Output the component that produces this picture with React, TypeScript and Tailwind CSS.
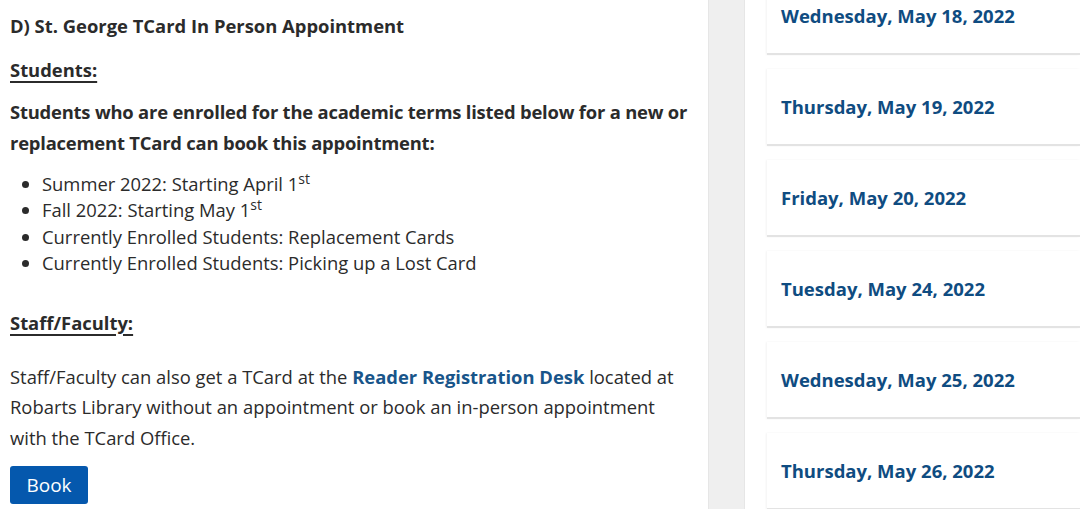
import React from "react";

const dates = [
  "Wednesday, May 18, 2022",
  "Thursday, May 19, 2022",
  "Friday, May 20, 2022",
  "Tuesday, May 24, 2022",
  "Wednesday, May 25, 2022",
  "Thursday, May 26, 2022",
];

export default function App() {
  return (
    <div
      className="flex w-[1080px] h-[509px] overflow-hidden bg-white text-[#2b2b2b]"
      style={{ fontFamily: '"Open Sans", "Noto Sans", sans-serif' }}
    >
      <div className="w-[708px] shrink-0 pl-[10px] pr-[4px] pt-[11px]">
        <h2 className="text-[18.4px] font-bold leading-[30px]">D) St. George TCard In Person Appointment</h2>
        <p className="mt-[14px] text-[18.4px] font-bold leading-[30px] underline underline-offset-[4px] decoration-[1.5px]">Students:</p>
        <p className="mt-[11px] text-[18.4px] font-bold leading-[31px] tracking-[-0.2px]">
          Students who are enrolled for the academic terms listed below for a new or replacement TCard can book this appointment:
        </p>
        <ul className="mt-[13px] pl-[32px] list-disc text-[18.4px] leading-[26.4px]">
          <li>Summer 2022: Starting April 1<sup className="text-[14px] leading-none">st</sup></li>
          <li>Fall 2022: Starting May 1<sup className="text-[14px] leading-none">st</sup></li>
          <li>Currently Enrolled Students: Replacement Cards</li>
          <li>Currently Enrolled Students: Picking up a Lost Card</li>
        </ul>
        <p className="mt-[31px] text-[18.4px] font-bold leading-[30px] underline underline-offset-[4px] decoration-[1.5px]">Staff/Faculty:</p>
        <p className="mt-[24px] max-w-[670px] text-[18.4px] leading-[30.5px]">
          Staff/Faculty can also get a TCard at the{" "}
          <a className="font-bold text-[#18558a]">Reader Registration Desk</a> located at Robarts Library without an appointment or book an in-person appointment with the TCard Office.
        </p>
        <button className="mt-[13px] h-[38px] w-[78px] rounded-[3px] bg-[#0558ad] text-white text-[19px]">Book</button>
      </div>
      <div className="w-[37px] shrink-0 bg-[#efefef] border-x border-[#e6e6e6]" />
      <div className="w-[22px] shrink-0" />
      <div className="flex-1 flex flex-col gap-[14px] -mt-[22px]">
        {dates.map((d) => (
          <div
            key={d}
            className="h-[77px] shrink-0 flex items-center pl-[14px] bg-white border-b-2 border-[#e3e3e3] shadow-[-1px_0_2px_rgba(0,0,0,0.05)]"
          >
            <span className="text-[18.5px] font-bold text-[#0f4c81]">{d}</span>
          </div>
        ))}
      </div>
    </div>
  );
}
